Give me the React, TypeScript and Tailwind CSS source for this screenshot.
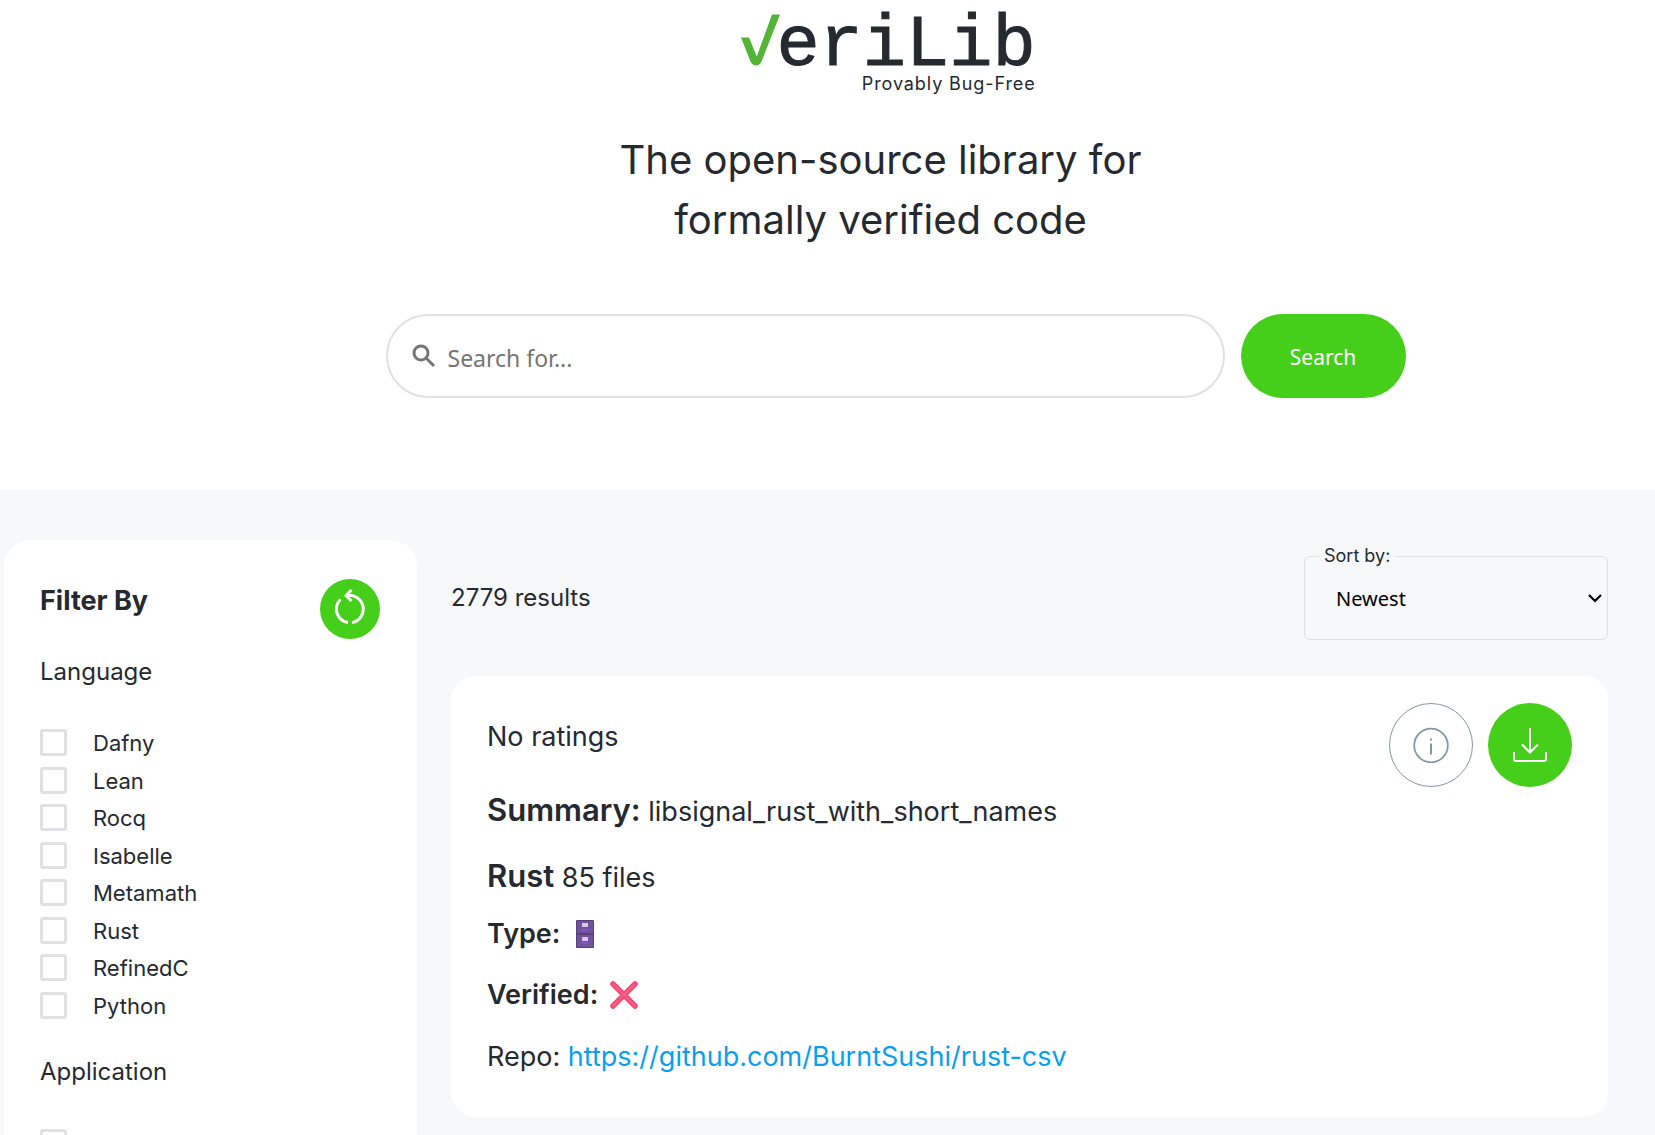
import React from "react";

const languages = ["Dafny", "Lean", "Rocq", "Isabelle", "Metamath", "Rust", "RefinedC", "Python"];

const boxClass =
  "size-[27px] shrink-0 appearance-none rounded-[3px] border-3 border-[#e0e0e5] bg-white checked:bg-[#45cf1a]";

function Logo() {
  return (
    <a href="#" aria-label="VeriLib home" className="flex flex-col items-end text-[#252a31]">
      <span className="flex items-end pt-[14px]">
        <svg width="39" height="52" viewBox="0 0 39 52" className="-mr-1 mb-[10px]" aria-hidden="true">
          <path
            d="M0 23.500H8L15.800 42.500L31 0.500H39L20.500 47.500Q18.500 51.500 15.300 51.500Q11.500 51.500 9.500 47.500Z"
            fill="#54b435"
          />
        </svg>
        <span className="font-['Liberation_Mono',monospace] text-[72px] leading-[60px] [-webkit-text-stroke:1px_#252a31]">
          eriLib
        </span>
      </span>
      <span className="text-lg leading-4 tracking-wider">Provably Bug-Free</span>
    </a>
  );
}

function Checkbox({ label }: { label: string }) {
  return (
    <label className="flex items-start gap-[26px] text-[22px] leading-7">
      <input type="checkbox" className={boxClass} />
      {label}
    </label>
  );
}

function ResetIcon() {
  return (
    <svg width="30" height="36" viewBox="0 0 30 36" fill="none" stroke="white" strokeWidth="3" aria-hidden="true">
      <path d="M5.500 10.500A13.500 13.500 0 0 0 13 33.500" />
      <path d="M17 33.500A13.500 13.500 0 0 0 12 6.500" />
      <path d="M16.500 1L11 6.500L16.500 12" />
    </svg>
  );
}

function Cabinet() {
  return (
    <svg width="18" height="28" viewBox="0 0 18 28" aria-label="File cabinet" role="img">
      <rect width="18" height="28" rx="1" fill="#584078" />
      <rect x="1" y="1" width="16" height="12" fill="#70549b" />
      <rect x="1" y="15" width="16" height="12" fill="#70549b" />
      <rect x="6" y="3" width="6" height="4" fill="#d8c8ec" />
      <rect x="6" y="17" width="6" height="4" fill="#d8c8ec" />
      <rect x="5" y="9" width="8" height="2" fill="#8654c8" />
      <rect x="5" y="22" width="8" height="2" fill="#8654c8" />
    </svg>
  );
}

function Cross() {
  return (
    <svg width="28" height="28" viewBox="0 0 28 28" aria-label="Not verified" role="img">
      <path d="M3 3L25 25M25 3L3 25" stroke="#f0436f" strokeWidth="5.500" strokeLinecap="round" />
      <path d="M3 3L25 25M25 3L3 25" stroke="#fb5b82" strokeWidth="3" strokeLinecap="round" />
    </svg>
  );
}

export default function App() {
  return (
    <div className="flex h-screen flex-col overflow-hidden bg-white font-[Inter,sans-serif] text-[#252a31]">
      <header className="flex h-[490px] shrink-0 flex-col items-center pl-[106px]">
        <div className="pl-4">
          <Logo />
        </div>
        <h1 className="mt-[38px] text-center text-[40px] leading-[60px]">
          The open-source library for
          <br />
          formally verified code
        </h1>
        <form className="mt-16 w-full max-w-[1050px] pl-[30px] font-['Noto_Sans',sans-serif]">
          <div className="flex h-[84px] gap-4">
            <label className="flex flex-1 items-center gap-3 rounded-full border-2 border-[#e0e0e5] pl-6 text-[#757575]">
              <svg width="24" height="24" viewBox="0 0 24 24" fill="none" stroke="currentColor" strokeWidth="3" aria-hidden="true">
                <circle cx="9" cy="9" r="7" />
                <path d="M14 14L22 22" />
              </svg>
              <input
                type="text"
                aria-label="Search"
                placeholder="Search for..."
                className="min-w-0 flex-1 bg-transparent pt-1 text-[23px] outline-none placeholder:text-[#757575]"
              />
            </label>
            <button type="button" className="w-[165px] rounded-full bg-[#45cf1a] pt-1 text-[21px] text-white">
              Search
            </button>
          </div>
        </form>
      </header>

      <main className="flex min-h-0 flex-1 items-start gap-[34px] bg-[#f7f8fa] pt-[51px] pr-[47px] pl-1">
        <aside className="w-[413px] shrink-0 rounded-3xl bg-white pt-[38px] pr-[37px] pb-9 pl-9">
          <div className="flex items-start justify-between">
            <h2 className="pt-1 text-[27px] leading-9 font-bold">Filter By</h2>
            <button
              type="button"
              aria-label="Reset filters"
              className="flex size-[60px] items-center justify-center rounded-full bg-[#45cf1a] pb-1"
            >
              <ResetIcon />
            </button>
          </div>
          <fieldset>
            <legend className="pt-[17px] text-2xl">Language</legend>
            <div className="mt-[41px] grid h-[300px] grid-rows-8">
              {languages.map((name) => (
                <Checkbox key={name} label={name} />
              ))}
            </div>
          </fieldset>
          <fieldset>
            <legend className="pt-[27px] text-2xl">Application</legend>
            <div className="mt-[41px]">
              <input type="checkbox" aria-label="Application option" className={boxClass} />
            </div>
          </fieldset>
        </aside>

        <section className="min-w-0 flex-1">
          <div className="flex items-start justify-between">
            <p className="pt-[41px] text-2xl">2779 results</p>
            <fieldset className="mt-px h-[98px] w-[304px] rounded-md border border-[#dfe1e5]">
              <legend className="ml-[14px] px-[5px] text-lg leading-7">Sort by:</legend>
              <div className="relative">
                <select
                  aria-label="Sort by"
                  className="h-[58px] w-full appearance-none bg-transparent pl-[31px] font-['Noto_Sans',sans-serif] text-[20px] text-black outline-none"
                >
                  <option>Newest</option>
                  <option>Oldest</option>
                </select>
                <svg
                  width="14"
                  height="9"
                  viewBox="0 0 14 9"
                  fill="none"
                  stroke="black"
                  strokeWidth="2.200"
                  className="pointer-events-none absolute top-6 right-[5px]"
                  aria-hidden="true"
                >
                  <path d="M1 1L7 7L13 1" />
                </svg>
              </div>
            </fieldset>
          </div>

          <article className="mt-9 flex items-start justify-between rounded-3xl bg-white px-9 pt-[27px] pb-10">
            <div className="min-w-0 pt-[14px] text-[27px] leading-10">
              <p>No ratings</p>
              <p className="mt-[33px]">
                <strong className="text-[31px] font-semibold">Summary:</strong> libsignal_rust_with_short_names
              </p>
              <p className="mt-6">
                <strong className="text-[31px] font-semibold">Rust</strong> 85 files
              </p>
              <p className="mt-4 flex items-center gap-4 font-semibold">
                Type: <Cabinet />
              </p>
              <p className="mt-[21px] flex items-center gap-3 font-semibold">
                Verified: <Cross />
              </p>
              <p className="mt-[22px]">
                Repo:{" "}
                <a href="https://github.com/BurntSushi/rust-csv" className="text-[#099fef]">
                  https://github.com/BurntSushi/rust-csv
                </a>
              </p>
            </div>
            <div className="flex gap-[15px]">
              <button
                type="button"
                aria-label="Details"
                className="flex size-[84px] items-center justify-center rounded-full border border-[#8496a9] text-[#8496a9]"
              >
                <svg width="36" height="36" viewBox="0 0 36 36" fill="none" stroke="currentColor" aria-hidden="true">
                  <circle cx="18" cy="18.500" r="16.800" strokeWidth="1.800" />
                  <path d="M18 16.500V27.500M18 11.500V13.500" strokeWidth="2" />
                </svg>
              </button>
              <button
                type="button"
                aria-label="Download"
                className="flex size-[84px] items-center justify-center rounded-full bg-[#45cf1a]"
              >
                <svg width="36" height="36" viewBox="0 0 36 36" fill="none" stroke="white" strokeWidth="2" aria-hidden="true">
                  <path d="M18 1V25M10 17.500L18 25.500L26 17.500" />
                  <path d="M2 25V32Q2 34 4 34H32Q34 34 34 32V25" />
                </svg>
              </button>
            </div>
          </article>
        </section>
      </main>
    </div>
  );
}
